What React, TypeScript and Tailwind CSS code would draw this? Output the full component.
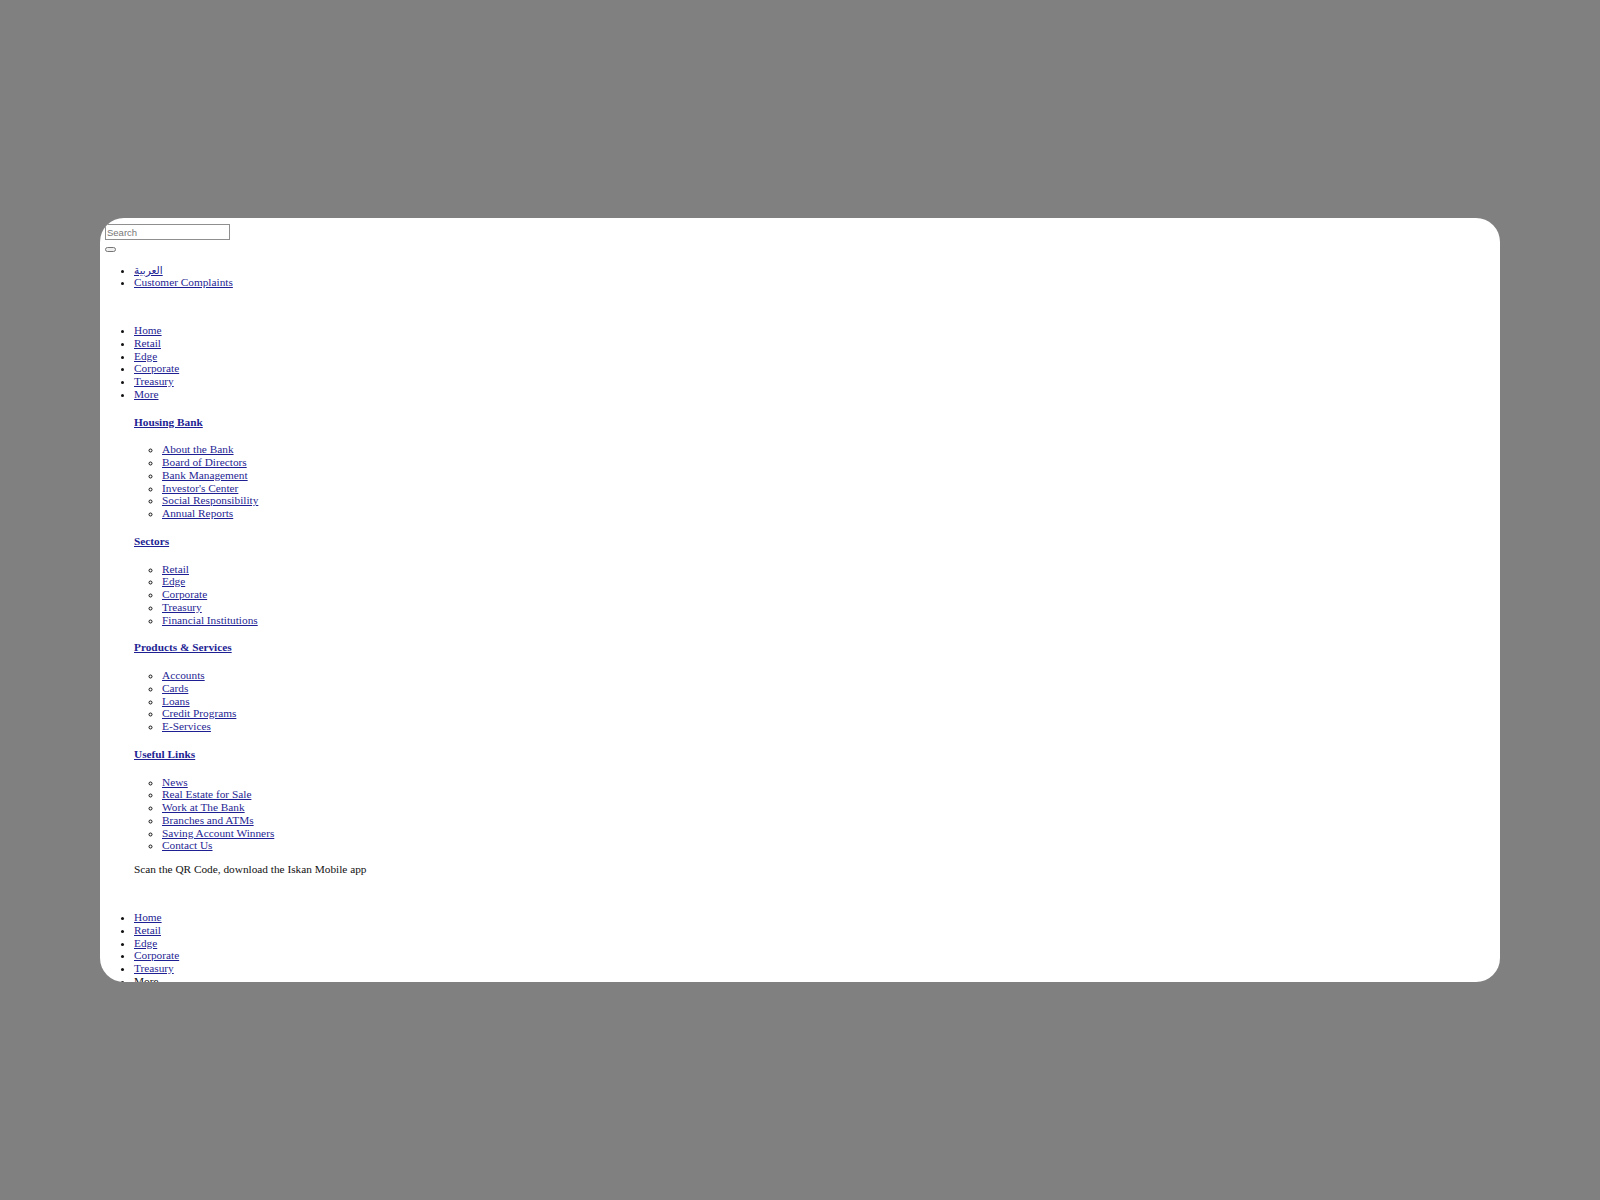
import React from "react";

const mainNav = ["Home", "Retail", "Edge", "Corporate", "Treasury"];

const sections = [
    {
        title: "Housing Bank",
        links: ["About the Bank", "Board of Directors", "Bank Management", "Investor's Center", "Social Responsibility", "Annual Reports"],
    },
    {
        title: "Sectors",
        links: ["Retail", "Edge", "Corporate", "Treasury", "Financial Institutions"],
    },
    {
        title: "Products & Services",
        links: ["Accounts", "Cards", "Loans", "Credit Programs", "E-Services"],
    },
    {
        title: "Useful Links",
        links: ["News", "Real Estate for Sale", "Work at The Bank", "Branches and ATMs", "Saving Account Winners", "Contact Us"],
    },
];

function Link({ children, bold = false }: { children: React.ReactNode; bold?: boolean }) {
    return (
        <a href="#" className={`text-[#1f1f94] underline ${bold ? "font-bold" : ""}`}>
            {children}
        </a>
    );
}

export default function App() {
    return (
        <div className="flex h-[1200px] w-[1600px] items-center justify-center bg-[#808080]">
            <div className="h-[764px] w-[1400px] overflow-hidden rounded-[24px] bg-white px-[5px] pt-[6px] font-['Liberation_Serif',serif] text-[11.3px] leading-[12.75px] text-[#111]">
                {/* search */}
                <form>
                    <input
                        type="text"
                        placeholder="Search"
                        className="block h-[16px] w-[125px] border-[1.5px] border-[#8f8f8f] px-[1px] font-['Liberation_Sans',sans-serif] text-[9.5px] placeholder:text-[#767676]"
                    />
                    <button
                        type="button"
                        className="mt-[7px] block h-[5px] w-[11px] rounded-[3px] border border-[#767676] bg-[#efefef]"
                    />
                </form>

                <ul className="mt-[11.5px] list-disc pl-[29px]">
                    <li>
                        <Link>
                            <span className="font-['DejaVu_Sans',sans-serif] text-[10.5px]">العربية</span>
                        </Link>
                    </li>
                    <li>
                        <Link>Customer Complaints</Link>
                    </li>
                </ul>

                <ul className="mt-[35px] list-disc pl-[29px]">
                    {mainNav.map((item) => (
                        <li key={item}>
                            <Link>{item}</Link>
                        </li>
                    ))}
                    <li>
                        <Link>More</Link>
                        <div>
                            {sections.map((section) => (
                                <div key={section.title}>
                                    <h4 className="my-[15px]">
                                        <Link bold>{section.title}</Link>
                                    </h4>
                                    <ul className="list-[circle] pl-[28px]">
                                        {section.links.map((link) => (
                                            <li key={link}>
                                                <Link>{link}</Link>
                                            </li>
                                        ))}
                                    </ul>
                                </div>
                            ))}
                            <p className="mt-[11.3px]">Scan the QR Code, download the Iskan Mobile app</p>
                        </div>
                    </li>
                </ul>

                {/* mobile nav */}
                <ul className="mt-[35px] list-disc pl-[29px]">
                    {mainNav.map((item) => (
                        <li key={item}>
                            <Link>{item}</Link>
                        </li>
                    ))}
                    <li>More</li>
                </ul>
            </div>
        </div>
    );
}
